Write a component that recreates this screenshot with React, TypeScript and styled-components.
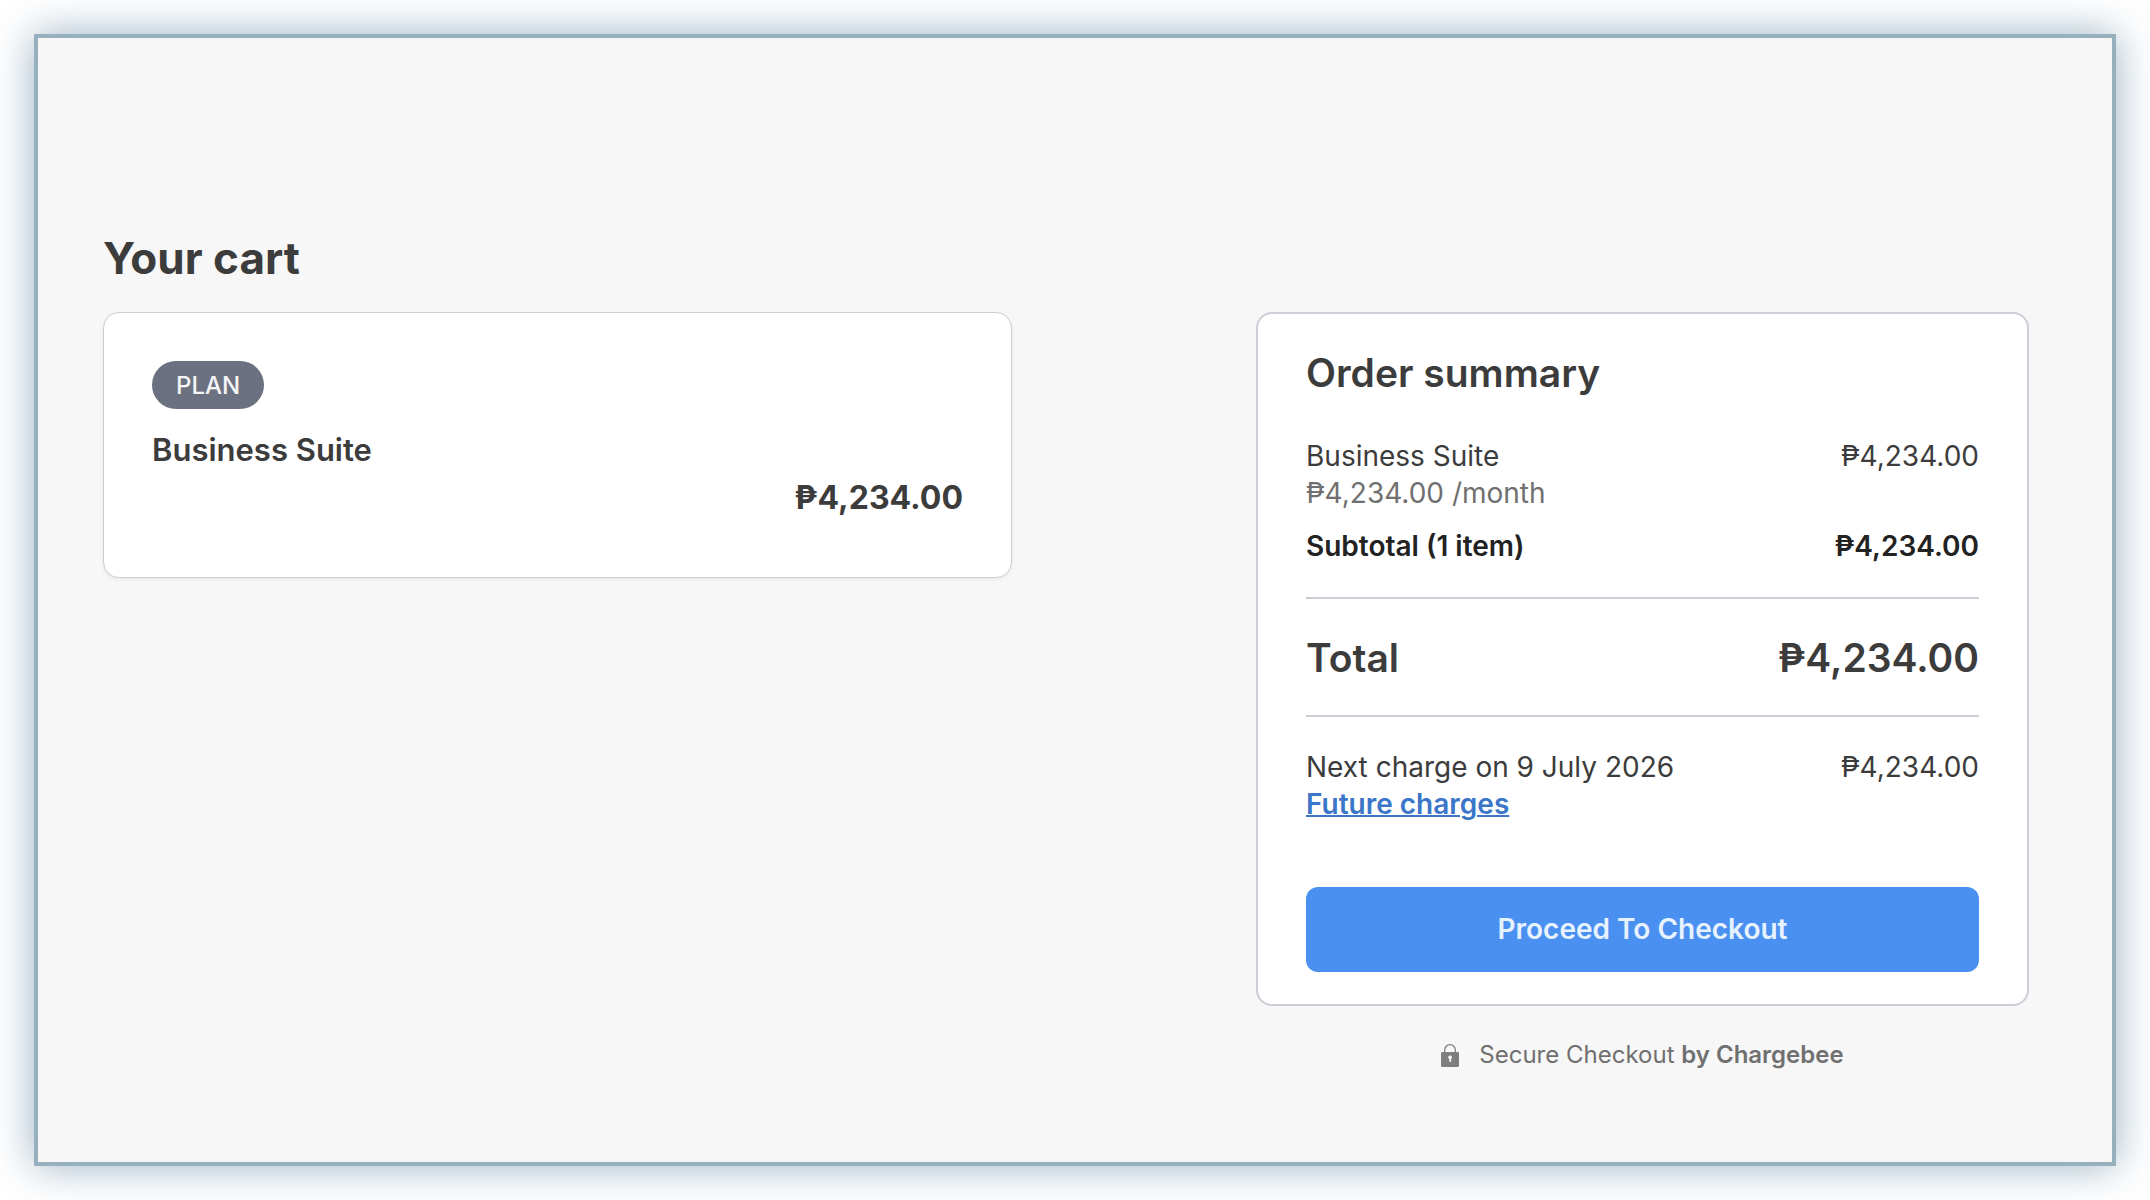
import React from "react";
import styled, { createGlobalStyle } from "styled-components";

const GlobalStyle = createGlobalStyle`
  *, *::before, *::after { box-sizing: border-box; }
  body {
    margin: 0;
    background: #fff;
    color: #3c3c3c;
    font-family: Inter, "Liberation Sans", sans-serif;
    font-size: 28px;
    line-height: 37px;
    -webkit-font-smoothing: antialiased;
  }
  h1, h2, h3, p, dl, dt, dd { margin: 0; }
`;

const Page = styled.div`
  display: flex;
  min-height: 100vh;
  padding: 34px;
`;

const Frame = styled.main`
  flex: 1;
  padding: 188px 83px 80px 65px;
  border: 4px solid #96b0be;
  background: #f7f7f7;
  box-shadow: 0 0 40px #9bb1c2;
`;

const PageTitle = styled.h1`
  margin-bottom: 22px;
  font-size: 44px;
  line-height: 64px;
  font-weight: 700;
`;

const Columns = styled.div`
  display: grid;
  grid-template-columns: 909fr 773fr;
  column-gap: 244px;
  align-items: start;
`;

const PlanCard = styled.section`
  display: flex;
  flex-direction: column;
  padding: 48px 48px 55px;
  border: 1px solid #cdcdd6;
  border-radius: 16px;
  background: #fff;
  box-shadow: 0 2px 4px rgba(0, 0, 0, 0.06);
`;

const Badge = styled.span`
  align-self: flex-start;
  margin-bottom: 17px;
  padding: 1px 24px 0;
  border-radius: 24px;
  background: #6b7180;
  color: #f4f5f7;
  font-size: 24px;
  line-height: 47px;
  font-weight: 500;
`;

const PlanName = styled.h2`
  font-size: 31px;
  line-height: 48px;
  font-weight: 600;
`;

const PlanPrice = styled.p`
  text-align: right;
  font-size: 32px;
  line-height: 48px;
  font-weight: 700;
`;

const SummaryCard = styled.section`
  padding: 29px 48px 32px;
  border: 2px solid #cdcdd6;
  border-radius: 16px;
  background: #fff;
`;

const SummaryTitle = styled.h2`
  margin-bottom: 35px;
  font-size: 39px;
  line-height: 60px;
  font-weight: 600;
`;

const Row = styled.dl`
  display: flex;
  justify-content: space-between;
`;

const SubtotalRow = styled(Row)`
  margin-top: 16px;
  color: #222;
  font-weight: 600;
`;

const TotalRow = styled(Row)`
  margin: 32px 0;
  padding: 33px 0 31px;
  border: solid #cdcdd6;
  border-width: 2px 0;
  font-size: 39px;
  line-height: 52px;
  font-weight: 600;
`;

const Muted = styled.p`
  color: #707070;
`;

const FutureLink = styled.a`
  display: table;
  color: #3b76c8;
  font-weight: 600;
  text-decoration: underline;
  text-decoration-thickness: 2px;
`;

const CheckoutButton = styled.button`
  display: block;
  width: 100%;
  margin-top: 64px;
  padding: 24px;
  border: 0;
  border-radius: 12px;
  background: #4a90f0;
  color: #e6f2fe;
  font: inherit;
  font-weight: 600;
  cursor: pointer;
`;

const Secure = styled.p`
  display: flex;
  justify-content: center;
  align-items: center;
  gap: 20px;
  margin-top: 33px;
  color: #707070;
  font-size: 24px;
  line-height: 32px;

  b { font-weight: 600; }
`;

const LockIcon = () => (
  <svg width="18" height="23" viewBox="0 0 18 23" aria-hidden="true">
    <path d="M3.7 9V6a5.3 5.3 0 0 1 10.6 0v3" fill="none" stroke="#7d7e80" strokeWidth="1.3" />
    <rect y="8" width="18" height="15" rx="1.2" fill="#7d7e80" />
    <path d="M7.2 13.6a1.9 1.9 0 1 1 2.9 1.4v3H8.4v-3a1.8 1.8 0 0 1-1.2-1.4z" fill="#f7f7f7" />
  </svg>
);

const price = "₱4,234.00";

export default function App() {
  return (
    <>
      <GlobalStyle />
      <Page>
        <Frame>
          <PageTitle>Your cart</PageTitle>
          <Columns>
            <PlanCard>
              <Badge>PLAN</Badge>
              <PlanName>Business Suite</PlanName>
              <PlanPrice>{price}</PlanPrice>
            </PlanCard>
            <aside>
              <SummaryCard>
                <SummaryTitle>Order summary</SummaryTitle>
                <Row>
                  <dt>Business Suite</dt>
                  <dd>{price}</dd>
                </Row>
                <Muted>{price} /month</Muted>
                <SubtotalRow>
                  <dt>Subtotal (1 item)</dt>
                  <dd>{price}</dd>
                </SubtotalRow>
                <TotalRow>
                  <dt>Total</dt>
                  <dd>{price}</dd>
                </TotalRow>
                <Row>
                  <dt>Next charge on 9 July 2026</dt>
                  <dd>{price}</dd>
                </Row>
                <FutureLink href="#future-charges">Future charges</FutureLink>
                <CheckoutButton type="button">Proceed To Checkout</CheckoutButton>
              </SummaryCard>
              <Secure>
                <LockIcon />
                <span>Secure Checkout <b>by Chargebee</b></span>
              </Secure>
            </aside>
          </Columns>
        </Frame>
      </Page>
    </>
  );
}
